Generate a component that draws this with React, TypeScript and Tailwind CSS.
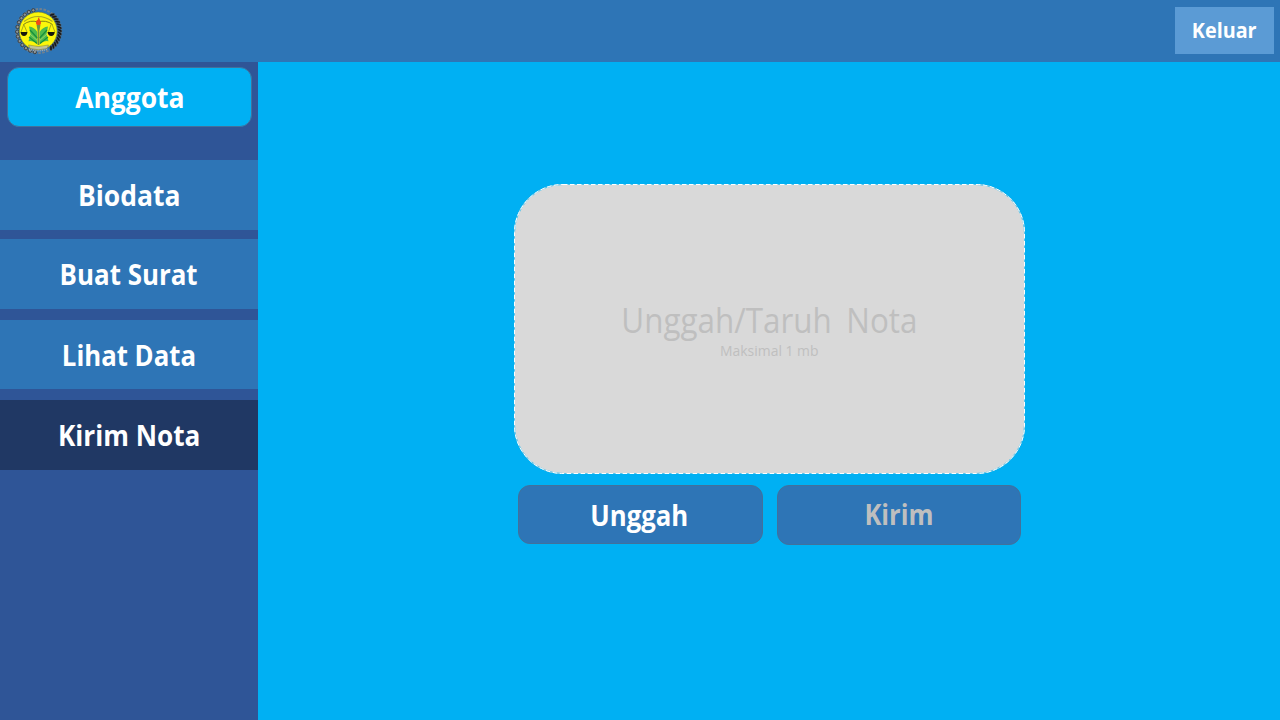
const GEAR_TEETH = Array.from({ length: 13 }, (_, i) => 100 + i * 13);
const GRAINS = Array.from({ length: 14 }, (_, i) => -50 + i * 8);

function polar(deg: number, r: number): [number, number] {
  const a = (deg * Math.PI) / 180;
  return [23.5 + r * Math.cos(a), 24 + r * Math.sin(a)];
}

function Emblem() {
  return (
    <svg viewBox="0 0 48 48" className="size-12" aria-hidden="true">
      <circle cx="23.5" cy="24" r="22" fill="none" stroke="#71818f" strokeWidth="2" strokeDasharray="2.6 1.4" />
      {GEAR_TEETH.map((d) => {
        const [x, y] = polar(d, 21.3);
        return <circle key={d} cx={x} cy={y} r="1.7" fill="#8a9498" stroke="#33383c" strokeWidth=".9" />;
      })}
      {GRAINS.map((d) => {
        const [x, y] = polar(d, 21.2);
        return (
          <ellipse key={d} cx={x} cy={y} rx="2.7" ry="1.2" fill="#15181c" stroke="#5c6468" strokeWidth=".4" transform={`rotate(${d + 35} ${x} ${y})`} />
        );
      })}
      <circle cx="23.2" cy="24" r="19" fill="#fbf60b" stroke="#5d6440" strokeWidth=".6" />
      <path d="M9 14.5Q23 4.5 37.5 14.5" fill="none" stroke="#aaa724" strokeWidth="1.1" />
      <path d="M8.5 17.5Q15 12.5 23 15Q31 12.5 37.5 17.5" fill="none" stroke="#777616" strokeWidth=".9" />
      <path d="M8.8 17.5L6 25M8.8 17.5L12 25M36 17.5L33.5 25M37 17.5L40 25" stroke="#77781c" strokeWidth=".6" />
      <path d="M5.5 25H12.5Q12 29 9 29T5.5 25ZM32.5 25H39.8Q39.3 29 36.2 29T32.5 25Z" fill="#15180c" />
      <path d="M14 19.5Q19.5 20 22.3 25V37Q19 33.5 13.5 34.2L15.5 27Z" fill="#4dbb4c" />
      <path d="M33 19.5Q27.5 20 24.7 25V37Q28 33.5 33.5 34.2L31.5 27Z" fill="#4dbb4c" />
      <path d="M15 23L22.3 31M14 30L22 36.5M32 23L24.7 31M33 30L25 36.5" stroke="#178f3c" strokeWidth="1.2" />
      <path d="M14.5 26.5L22.3 33.5M32.5 26.5L24.7 33.5" stroke="#b9df76" strokeWidth=".7" />
      <path d="M21.6 18H25.4L24.4 24V38H22.6V24Z" fill="#6c9442" />
      <path d="M21.8 18Q19.5 14.5 23 12.5Q22.7 10.8 24.2 10Q23.8 12 25.2 13.2Q26.7 15.5 25.2 18Z" fill="#ef4b17" />
      <path d="M13.5 38Q23.5 41 33.5 38L32 41.5Q23.5 44 15 41.5Z" fill="#bec19c" stroke="#75794a" strokeWidth=".5" />
      <path d="M14 42Q23.5 45.5 33 42" fill="none" stroke="#a4adb5" strokeWidth="1.4" strokeDasharray="1.2 .7" />
    </svg>
  );
}

export default function App() {
  return (
    <div className="flex h-[720px] w-[1280px] flex-col overflow-hidden bg-[#00b0f3] font-['Open_Sans',sans-serif] text-white">
      <header className="flex h-[62px] shrink-0 items-start justify-between bg-[#2e75b6] pt-[7px] pr-1.5 pl-[15px]">
        <Emblem />
        <button className="flex h-[47px] w-[99px] items-center justify-center bg-[#5b9bd5] text-[21.5px] font-bold">
          <span className="scale-x-[0.92]">Keluar</span>
        </button>
      </header>
      <div className="flex min-h-0 flex-1">
        <aside className="flex w-[258px] shrink-0 flex-col bg-[#2f5597] text-[28px] font-bold">
          <div className="mt-[5px] ml-[7px] flex h-[60px] w-[245px] items-center justify-center rounded-xl border border-[#41719c] bg-[#00b0f3]">
            <span className="scale-x-[0.945]">Anggota</span>
          </div>
          <nav className="mt-[33px] flex flex-col">
            <a className="flex h-[70px] items-center justify-center bg-[#2e75b6]">
              <span className="scale-x-[0.945]">Biodata</span>
            </a>
            <a className="mt-[9px] flex h-[70px] items-center justify-center bg-[#2e75b6]">
              <span className="scale-x-[0.925]">Buat Surat</span>
            </a>
            <a className="mt-[11px] flex h-[69px] items-center justify-center bg-[#2e75b6]">
              <span className="scale-x-[0.92]">Lihat Data</span>
            </a>
            <a className="mt-[11px] flex h-[70px] items-center justify-center bg-[#203864]">
              <span className="scale-x-[0.935]">Kirim Nota</span>
            </a>
          </nav>
        </aside>
        <main className="flex flex-1 flex-col items-start pt-[122px] pl-64">
          <section className="relative flex h-[290px] w-[511px] flex-col items-center rounded-[49px] bg-[#d9d9d9] pt-[114px] text-[#bfbfbf]">
            <svg className="absolute inset-0 size-full" aria-hidden="true">
              <rect x=".5" y=".5" width="510" height="289" rx="48.5" fill="none" stroke="#58c4ea" />
              <rect x=".5" y=".5" width="510" height="289" rx="48.5" fill="none" stroke="white" strokeDasharray="4.5 2.5" />
            </svg>
            <p className="scale-x-[0.923] text-[34px] leading-[44px] whitespace-pre">
              Unggah/Taruh<span className="tracking-[-1px]">{"  "}</span>Nota
            </p>
            <p className="scale-x-[0.96] text-[14.5px] leading-[18px]">Maksimal 1 mb</p>
          </section>
          <div className="mt-[11px] ml-1 flex items-start gap-3.5 text-[28px] font-bold">
            <button className="flex h-[59px] w-[245px] items-center justify-center rounded-xl border border-[#41719c] bg-[#2e75b6] pr-0.5">
              <span className="scale-x-[0.92]">Unggah</span>
            </button>
            <button className="flex h-[60px] w-[244px] items-center justify-center rounded-xl border border-[#41719c] bg-[#2e75b6] pb-0.5 text-[#bfbfbf]">
              <span className="scale-x-[0.91]">Kirim</span>
            </button>
          </div>
        </main>
      </div>
    </div>
  );
}
